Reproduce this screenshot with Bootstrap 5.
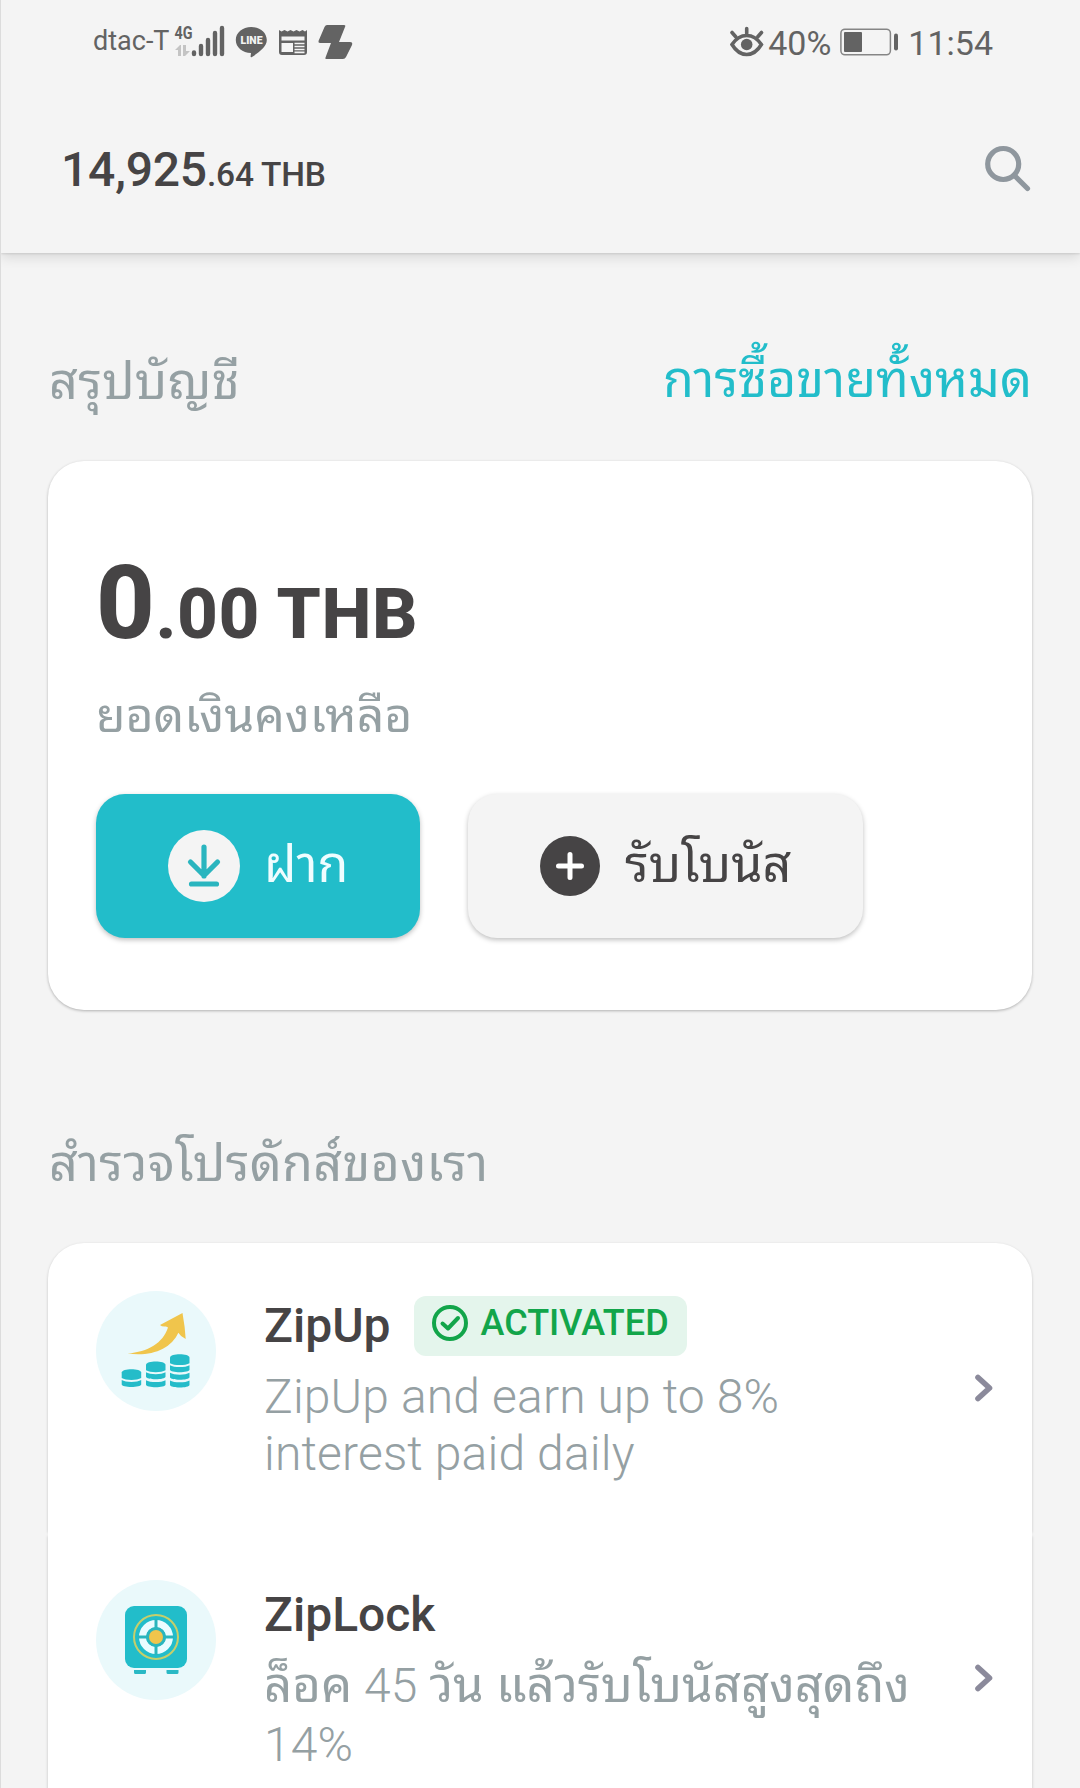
<!DOCTYPE html>
<html lang="th">
<head>
<meta charset="utf-8">
<meta name="viewport" content="width=device-width, initial-scale=1">
<title>Wallet</title>
<link href="https://cdn.jsdelivr.net/npm/bootstrap@5.3.0/dist/css/bootstrap.min.css" rel="stylesheet">
<style>
  :root { --ink:#464445; --muted:#95a0a3; --teal:#22bdca; --page:#f4f4f4; --status:#636363; }
  body { font-family:Roboto,"Noto Sans Thai Looped","Noto Sans Thai","Noto Sans",sans-serif; background:var(--page); color:var(--ink); font-size:48px; line-height:60px; height:1788px; overflow:hidden; border-left:1px solid #dcdcdc; }
  svg { flex:none; display:block; overflow:visible; }
  .th { font-size:50.2px; font-weight:400; }
  .statusbar { height:84px; padding:0 87px 0 92px; color:var(--status); background:var(--page); z-index:2; }
  .carrier { font-size:27px; line-height:30px; width:80px; padding-bottom:3px; }
  .clock { font-size:34px; line-height:40px; padding-top:2px; }
  .clock-pct { margin-left:3px; }
  .topbar { height:169px; padding:0 47px 0 60px; box-shadow:0 1px 2px rgba(0,0,0,.1),0 4px 12px rgba(0,0,0,.12); }
  .total { font-size:48px; padding-top:3px; font-weight:500; white-space:nowrap; letter-spacing:-.2px; }
  .total small { font-size:33.5px; line-height:1; letter-spacing:-.2px; }
  .page-main { padding:97px 48px 0 47px; }
  .sect { height:111px; line-height:64px; color:var(--muted); white-space:nowrap; }
  .sect span { padding-left:1px; letter-spacing:.3px; }
  .sect a { color:var(--teal); margin-top:-2px; }
  .panel { border:0; border-radius:36px; box-shadow:0 1px 3px rgba(0,0,0,.28); }
  .summary { height:549px; padding:92px 48px 72px; }
  .amount { font-size:102px; line-height:100px; font-weight:800; letter-spacing:.6px; white-space:nowrap; }
  .amount small { font-size:71px; font-weight:800; line-height:1; }
  .caption-line { margin-top:33px; color:var(--muted); white-space:nowrap; font-size:48.1px; }
  .actions { margin-top:48px; gap:48px; }
  .action { height:144px; border:0; border-radius:29px; font-size:48px; box-shadow:0 2px 5px rgba(0,0,0,.25); padding:0; white-space:nowrap; line-height:60px; }
  .action .th { padding-bottom:2px; }
  .deposit { width:324px; background:var(--teal); color:#effdff; padding-left:72px; gap:24px; }
  .bonus { width:395px; background:var(--page); color:var(--ink); padding-left:72px; gap:25px; }
  .explore { margin-top:122px; }
  .product { height:289px; padding:48px 38px 0 48px; background:#fff; border:0; box-shadow:0 1px 3px rgba(0,0,0,.2); }
  .product:first-child { border-radius:36px 36px 0 0; }
  .product + .product { box-shadow:0 4px 3px rgba(0,0,0,.2); }
  .bubble { width:120px; height:120px; background:#eaf9fb; }
  .info { padding:5px 0 0 48px; }
  .name { height:60px; gap:23px; font-weight:500; white-space:nowrap; }
  .tag { background:#e4f5ec; color:#12a54a; border-radius:12px; width:273px; height:60px; padding:0 0 6px 18px; gap:13px; font-size:36px; font-weight:500; }
  .desc { margin-top:12px; line-height:57px; font-weight:300; letter-spacing:.15px; color:var(--muted); white-space:nowrap; }
  .desc-th { line-height:59px; margin-top:11px; }
  .desc-th .th { font-size:49.1px; letter-spacing:.05px; }
  .chev { margin-top:83px; }
</style>
<script src="https://cdn.jsdelivr.net/npm/bootstrap@5.3.0/dist/js/bootstrap.bundle.min.js"></script>
</head>
<body>
<div class="statusbar position-relative d-flex justify-content-between align-items-center">
  <div class="d-flex align-items-center">
    <span class="carrier">dtac-T</span>
    <svg width="186" height="44" viewBox="173 21 186 44" fill="#636363">
      <text x="174.500" y="40" font-family="Roboto" font-weight="700" font-size="19" textLength="18" lengthAdjust="spacingAndGlyphs">4G</text>
      <path fill="#c4c4c4" d="M175 51l5-5h1v11h-3v-6zM183 46h3v6h4l-5 5h-2z"/>
      <g stroke="#636363" stroke-width="4.400" stroke-linecap="round"><path d="M194 53.500v1.500M201 47v8M208 41v14M215 34v21M222 29v26"/></g>
      <path d="M251.300 28c8.800 0 15.500 5.600 15.500 13 0 6.500-7 11.500-14.800 17-.8.500-1.600.2-1.400-.8l.4-3.200c-8.500-.2-15.200-5.500-15.200-13 0-7.400 6.700-13 15.500-13z"/>
      <text x="240.500" y="45.300" font-family="Roboto" font-weight="900" font-size="10.500" fill="#f4f4f4" textLength="22" lengthAdjust="spacingAndGlyphs">LINE</text>
      <path fill-rule="evenodd" d="M279 31l2.500 1.500 3-1.500 3 1.500 3-1.500 3 1.500 3-1.500 3 1.500 3-1.500 2.500 1.500 2-1.500v22q0 3-3 3h-22q-3 0-3-3zM281.500 37.500v4h23v-4zM281.500 44v9h11.500v-9z"/>
      <path stroke="#f4f4f4" stroke-width="1.700" d="M294.500 44.500h10M294.500 47.500h10M294.500 50.500h10M294.500 53.300h10"/>
      <path d="M327 26h17q2 0 1 2l-6 15h11q3 0 2 3l-6 12q-1 2-3 2h-17q-1 0-.5-1.500l5.500-14.500h-11q-2 0-1.500-2l6-14q1-2 2.500-2z"/>
    </svg>
  </div>
  <div class="d-flex align-items-center">
    <svg width="36" height="34" viewBox="729 25.500 36 34" fill="none" stroke="#636363" stroke-width="3.600" stroke-linecap="round"><path d="M732 45q6-9 14.700-9t14.700 9q-6 10-14.700 10t-14.700-10zM746.700 34v-5M735.500 37l-3.500-4M758 37l3.500-4"/><circle cx="746.700" cy="45" r="5.800" fill="#636363" stroke="none"/></svg>
    <span class="clock clock-pct">40%</span>
    <svg class="ms-2" width="61" height="28" viewBox="840 28.500 61 28" fill="#636363"><rect x="841.900" y="29.700" width="49.500" height="25.600" rx="4" fill="none" stroke="#858585" stroke-width="1.500"/><rect x="845" y="32.500" width="18" height="20" rx="1"/><rect x="895" y="34" width="4" height="17" rx="2"/></svg>
    <span class="clock ms-2">11:54</span>
  </div>
</div>
<header class="topbar d-flex justify-content-between align-items-center">
  <div class="total">14,925<small>.64 THB</small></div>
  <svg width="48" height="48" viewBox="984 145 48 48" fill="none" stroke="#8f979e" stroke-width="5.200" stroke-linecap="round"><circle cx="1002.200" cy="164" r="15.500"/><path d="M1013.500 175.500l13 13"/></svg>
</header>
<main class="page-main">
  <div class="sect d-flex justify-content-between align-items-start"><span class="th">สรุปบัญชี</span><a class="th text-decoration-none" href="#">การซื้อขายทั้งหมด</a></div>
  <section class="card panel summary">
    <div class="amount">0<small>.00 THB</small></div>
    <div class="caption-line">ยอดเงินคงเหลือ</div>
    <div class="actions d-flex">
      <button class="btn action deposit d-flex align-items-center"><svg width="72" height="72" viewBox="0 0 72 72"><circle cx="36" cy="36" r="36" fill="#f4f4f4"/><path d="M36 17v29M22.500 32L36 45.500 49.500 32M23.500 54h25" fill="none" stroke="#2ab5bf" stroke-width="5.200" stroke-linecap="round" stroke-linejoin="round"/></svg><span class="th">ฝาก</span></button>
      <button class="btn action bonus d-flex align-items-center"><svg width="60" height="60" viewBox="0 0 60 60"><circle cx="30" cy="30" r="30" fill="#464445"/><path d="M30 18.500v23M18.500 30h23" stroke="#fff" stroke-width="5" stroke-linecap="round"/></svg><span class="th">รับโบนัส</span></button>
    </div>
  </section>
  <div class="sect explore"><span class="th">สำรวจโปรดักส์ของเรา</span></div>
  <div class="list-group">
    <div class="product d-flex align-items-start">
      <div class="bubble rounded-circle flex-shrink-0">
        <svg width="120" height="120" viewBox="0 0 120 120" fill="#24bcc9">
          <path fill="#f0c54c" d="M31.500 62.500C52 61 67 52 72 36.500L70 35.500Q66 36 64 34L86.500 22Q89 36 89.700 48 85 46 82.300 41.700C75 58 55 66 31.500 62.500z"/>
          <defs>
            <path id="cap" d="M0 3.500c0-4.500 19.500-4.500 19.500 0v5.500c-4 2.500-15.500 2.500-19.500 0z"/>
            <path id="coin" d="M0 0c4 2.500 15.500 2.500 19.500 0v4.500c0 3.300-19.500 3.300-19.500 0z"/>
          </defs>
          <use href="#cap" x="25.700" y="78"/><use href="#coin" x="25.700" y="89"/>
          <use href="#cap" x="50" y="70.300"/><use href="#coin" x="50" y="81.300"/><use href="#coin" x="50" y="89.200"/>
          <use href="#cap" x="74" y="63.200"/><use href="#coin" x="74" y="74.200"/><use href="#coin" x="74" y="81.800"/><use href="#coin" x="74" y="89.400"/>
        </svg>
      </div>
      <div class="info flex-grow-1">
        <div class="name d-flex align-items-center"><span>ZipUp</span><span class="tag d-flex align-items-center"><svg width="36" height="36" viewBox="0 0 36 36" fill="none" stroke="#12a54a" stroke-width="4"><circle cx="18" cy="18" r="16"/><path d="M10.500 18.500l5.500 5 10-10.500" stroke-linecap="round" stroke-linejoin="round"/></svg><span>ACTIVATED</span></span></div>
        <div class="desc">ZipUp and earn up to 8%<br>interest paid daily</div>
      </div>
      <svg class="chev" width="20" height="28" viewBox="0 0 20 28" fill="none" stroke="#8b8a9b" stroke-width="5.600" stroke-linecap="round" stroke-linejoin="round"><path d="M4 3.500L15.500 14 4 24.500"/></svg>
    </div>
    <div class="product d-flex align-items-start">
      <div class="bubble rounded-circle flex-shrink-0">
        <svg width="120" height="120" viewBox="0 0 120 120">
          <rect x="29" y="26" width="62" height="62" rx="9" fill="#22bdca"/>
          <path fill="#2ab9c5" d="M38 90h12v2.500q0 1.500-1.500 1.500h-9q-1.500 0-1.500-1.500zM70.500 90h12v2.500q0 1.500-1.500 1.500h-9q-1.500 0-1.500-1.500z"/>
          <circle cx="60" cy="57" r="22" fill="none" stroke="#c5cf6b" stroke-width="2"/>
          <circle cx="60" cy="57" r="13.500" fill="none" stroke="#eafcff" stroke-width="7"/>
          <path d="M60 39v36M42 57h36" stroke="#2ab5bd" stroke-width="3"/>
          <circle cx="60" cy="57" r="9.800" fill="#2ab5bd"/><circle cx="60" cy="57" r="7" fill="#f0c54c"/>
        </svg>
      </div>
      <div class="info flex-grow-1">
        <div class="name d-flex align-items-center"><span>ZipLock</span></div>
        <div class="desc desc-th"><span class="th">ล็อค</span> 45 <span class="th">วัน แล้วรับโบนัสสูงสุดถึง</span><br>14%</div>
      </div>
      <svg class="chev" width="20" height="28" viewBox="0 0 20 28" fill="none" stroke="#8b8a9b" stroke-width="5.600" stroke-linecap="round" stroke-linejoin="round"><path d="M4 4.500L15.500 15 4 25.500"/></svg>
    </div>
  </div>
</main>
</body>
</html>
